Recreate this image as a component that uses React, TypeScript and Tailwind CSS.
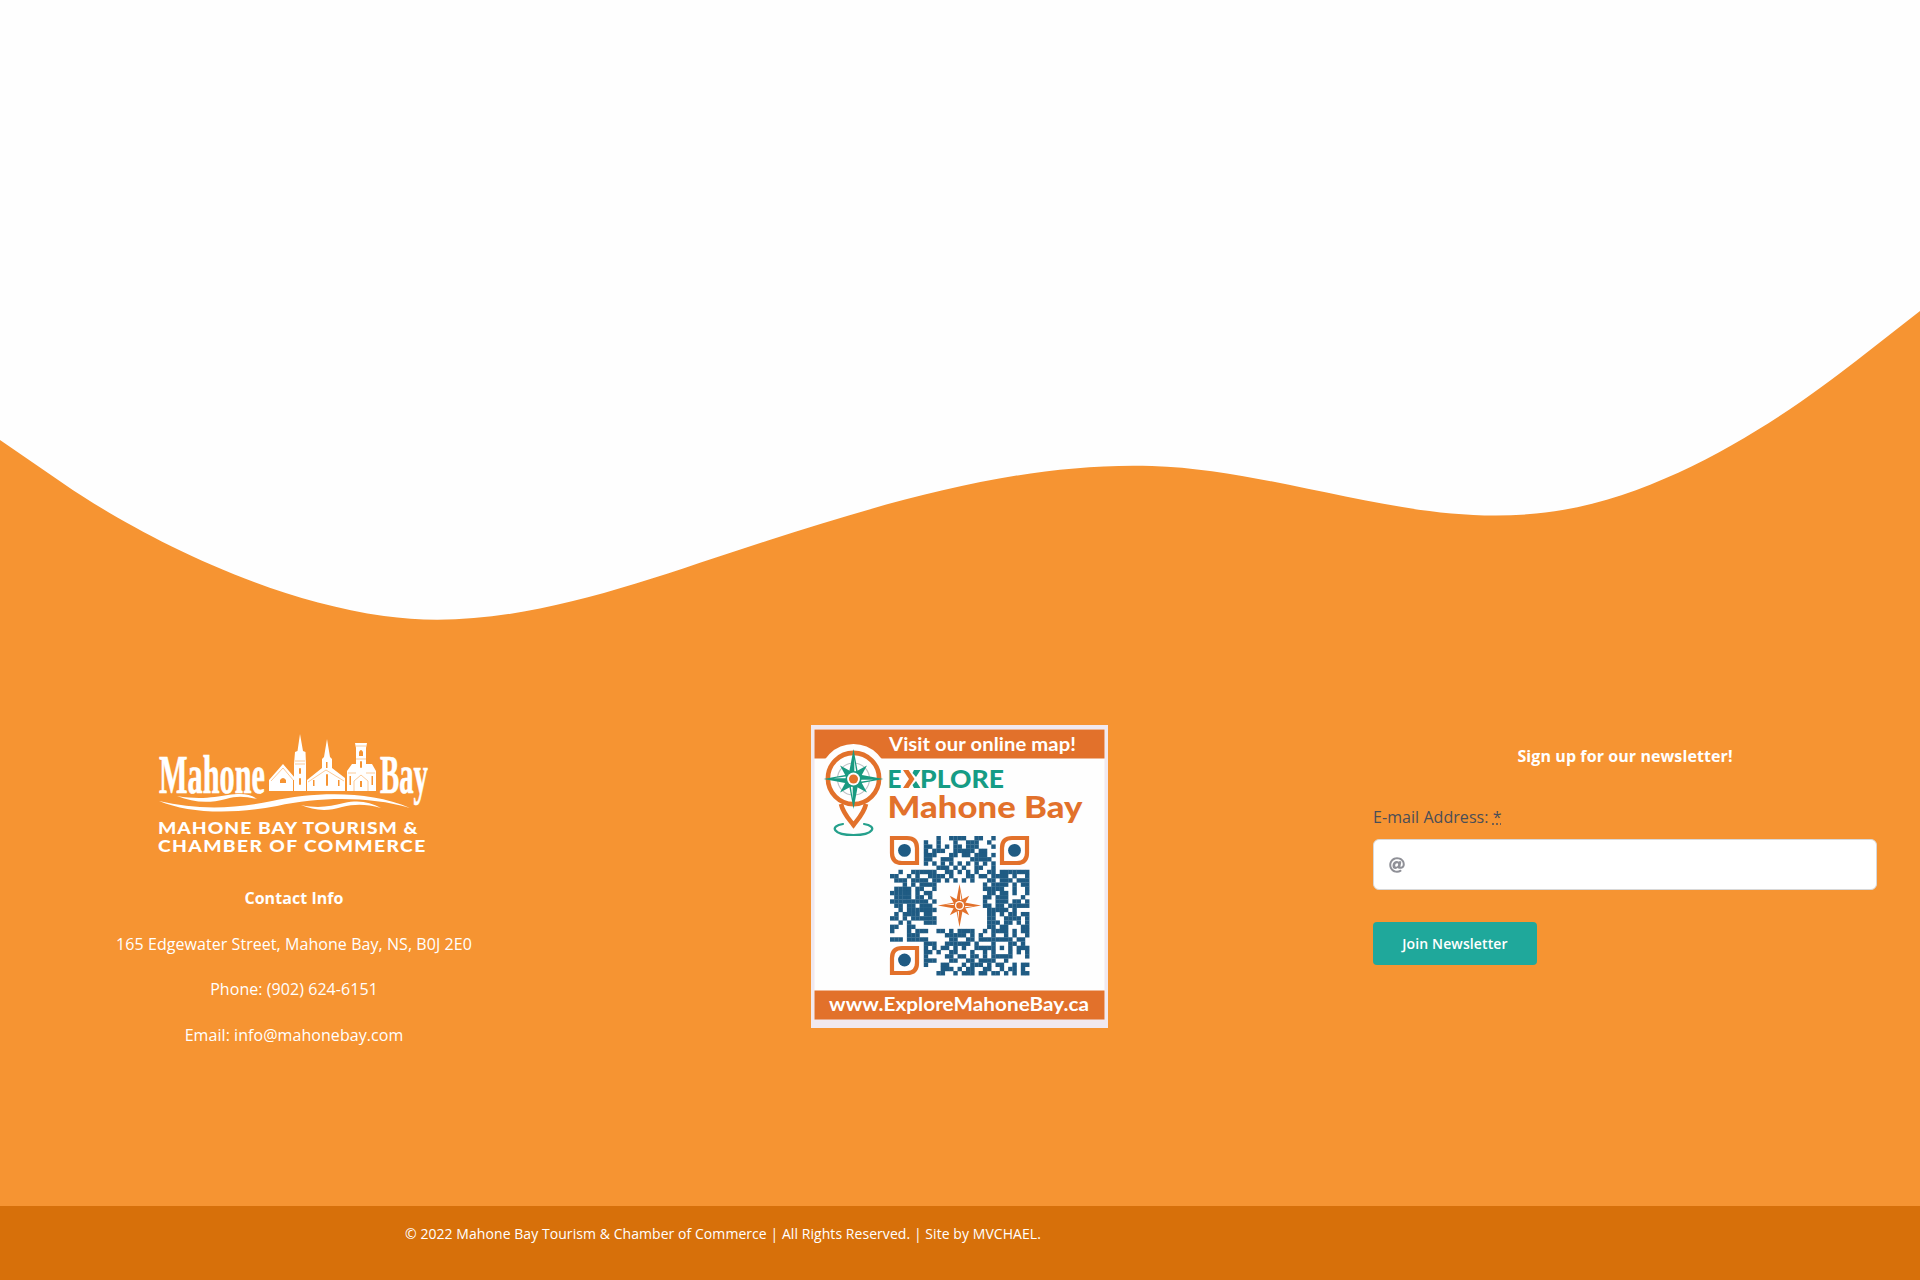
import { FaAt } from "react-icons/fa";

const QR_ROWS = [
  "...........#..####..##..#........",
  "........#..#...#..###..#.........",
  "........##.#.#.##.###...#........",
  "........#.###..#####.##..........",
  "........###...##.##.###.#........",
  "........##..###....#####.........",
  "........#.#.#.#.#.#.#.#.#........",
  "...........###.#.#..##..#........",
  "..#..######..##.#.#.#..##.#######",
  "##..#.#..####.#...##.##.####.#..#",
  ".###.####.##.#.#.#.#...##.###.###",
  "...#.#.####...........#.####.#.##",
  ".####.##..#...........#####..#..#",
  "#####.#.##.............##.##.#..#",
  ".####.##.#............##.###...#.",
  "#########.#...........#..###.##.#",
  ".##.##.###............##.##.#####",
  "..#.#######............#####.#...",
  ".#.####.##.............##.#.##.##",
  "##.#.######............##..####.#",
  "..#.#...###............###.##.#.#",
  "##..##.................##.##...##",
  "#...#.###..##.#.####..#.####.#.##",
  "....###......#####.#.#..#..#.#..#",
  "###.#####.....##..##.########.##.",
  "........###..######.#...#...##.#.",
  "........#.#.##.#.#..#####.#.#.###",
  "........##.#..##...#..#.#...#.#.#",
  "........#....##.##.##.#.#####...#",
  "........###...##..##.####..#.....",
  "........#...##...#.###.#.##..#.##",
  "............###.#.##..##..#.##.#.",
  "...........##..#.###.##.##.#.#.##",
];

function QrCode() {
  const m = 4.22;
  return (
    <g fill="#1f5b83">
      {QR_ROWS.map((row, y) =>
        [...row].map((cell, x) =>
          cell === "#" ? (
            <rect key={`${x}-${y}`} x={79 + x * m} y={111 + y * m} width={m + 0.2} height={m + 0.2} />
          ) : null
        )
      )}
      <g stroke="#e2712b" strokeWidth="4.2" fill="#fff">
        <path d="M81 113H96Q106 113 106 123V138H91Q81 138 81 128Z" />
        <path d="M216 113H201Q191 113 191 123V138H206Q216 138 216 128Z" />
        <path d="M81 248H96Q106 248 106 238V223H91Q81 223 81 233Z" />
      </g>
      <circle cx="93.5" cy="125.4" r="6.4" />
      <circle cx="203.5" cy="125.4" r="6.4" />
      <circle cx="93.5" cy="235" r="6.4" />
    </g>
  );
}

function Compass({ color, dot }: { color: string; dot: string }) {
  return (
    <g>
      <g fill={color}>
        {[45, 135, 225, 315].map((a) => (
          <path key={a} d="M0 -19L3.600 -7L0 0L-3.600 -7Z" transform={`rotate(${a})`} />
        ))}
      </g>
      {[0, 90, 180, 270].map((a) => (
        <g key={a} transform={`rotate(${a})`}>
          <path d="M0 -30L4.300 -7L0 0L-4.300 -7Z" fill={color} />
          <path d="M.8 -20L2.600 -8L.8 -6Z" fill="#fff" />
        </g>
      ))}
      <circle r="8" fill={color} />
      <circle r="6.400" fill="#fff" />
      <circle r="4.500" fill={dot} />
    </g>
  );
}

function MapPoster() {
  return (
    <svg width="297" height="303" viewBox="0 0 297 303" fontFamily="Lato, sans-serif" className="block">
      <rect width="297" height="303" fill="#f1e9ef" />
      <rect x="3.5" y="4" width="290" height="290" fill="#fefefe" />
      <rect x="3.5" y="4.5" width="290" height="29" fill="#e2712b" />
      <rect x="3.5" y="265.5" width="290" height="29" fill="#e2712b" />
      <circle cx="42.5" cy="53" r="34" fill="#fefefe" />
      <text x="78" y="26" fontSize="18" fontWeight="700" fill="#fff" textLength="187" lengthAdjust="spacingAndGlyphs">
        Visit our online map!
      </text>
      <path d="M30 79C32 88 37 93 42.5 100C48 93 53 88 55 79" fill="none" stroke="#e2712b" strokeWidth="4.6" />
      <circle cx="42.5" cy="53.5" r="25.6" fill="#fff" stroke="#e2712b" strokeWidth="4.6" />
      <circle cx="42.5" cy="54" r="16" fill="none" stroke="#bfc3c7" strokeWidth="1.2" />
      <g transform="translate(42.5 54)">
        <Compass color="#199a80" dot="#e2712b" />
      </g>
      <path
        d="M32 99C18 101 22 110 42.5 110S67 101 53 99"
        fill="none"
        stroke="#25a08c"
        strokeWidth="2.2"
        strokeLinecap="round"
      />
      <g fontWeight="900" fontSize="25.5" fill="#169c85">
        <text x="76.5" y="63" textLength="14" lengthAdjust="spacingAndGlyphs">E</text>
        <text x="109" y="63" textLength="84" lengthAdjust="spacingAndGlyphs">PLORE</text>
      </g>
      <path d="M92 45H97.500L103.500 54L97.500 63H92L98 54Z" fill="#e2712b" />
      <path d="M103 45H109.500L105 52L101.500 48ZM105 56L109.500 63H103L101.500 60Z" fill="#169c85" />
      <text
        x="76.500"
        y="92.500"
        fontSize="30"
        fontWeight="900"
        fill="#e2712b"
        textLength="195"
        lengthAdjust="spacingAndGlyphs"
      >
        Mahone Bay
      </text>
      <QrCode />
      <g transform="translate(148.500 180.500) scale(.72)">
        <Compass color="#e2712b" dot="#e2712b" />
      </g>
      <text
        x="18"
        y="286"
        fontSize="19"
        fontWeight="700"
        fill="#fff"
        textLength="260"
        lengthAdjust="spacingAndGlyphs"
      >
        www.ExploreMahoneBay.ca
      </text>
    </svg>
  );
}

function ChamberLogo() {
  return (
    <svg width="280" height="124" viewBox="0 0 280 124" fill="#fff" className="block overflow-visible">
      <g fontFamily="Liberation Serif, serif" fontWeight="700" fontSize="54" stroke="#fff" strokeWidth="0.7">
        <text x="5" y="58.500" textLength="106" lengthAdjust="spacingAndGlyphs">Mahone</text>
        <text x="226" y="58.500" textLength="48" lengthAdjust="spacingAndGlyphs">Bay</text>
      </g>
      {/* Church with side gable */}
      <path d="M115 46L129 30L141 44V46H139V57H115Z" />
      <path d="M140 57V30L141 18L143.500 17L146 0L149 17L151.500 18L152 30V57Z" />
      {/* Centre church */}
      <path d="M153 57V46L168 34V25L170 23L173 5L176 23L178 25V34L191 44V57Z" />
      {/* Tower church */}
      <path d="M193 57V37L198 30H202V14L201 9H213L212 14V30H218L222 37V57Z" />
      <g fill="#f69432">
        <path d="M126 49V46Q129 42 132 46V49Z" />
        <rect x="145" y="34" width="2" height="6" rx="1" />
        <rect x="145" y="44" width="2" height="7" rx="1" />
        <rect x="172" y="28" width="1.500" height="6" />
        <rect x="172" y="40" width="2" height="12" rx="1" />
        <rect x="159" y="46" width="1.500" height="6" />
        <rect x="184" y="46" width="1.500" height="6" />
        <path d="M205 22V18Q207 14 209 18V22Z" />
        <rect x="206" y="27" width="2" height="7" rx="1" />
        <rect x="195.500" y="42" width="1.500" height="9" />
        <rect x="217.500" y="42" width="1.500" height="9" />
        <rect x="206" y="47" width="2" height="6" />
      </g>
      <g fill="none" stroke="#f69432" strokeWidth="0.500">
        <path d="M117 47L129 34L140 47M141 27H151M141 30H151M154 48L172 36L190 47M194 39H202M212 39H221M200 57V47L207 41L214 47V57M202 25H212M202 12H212" />
      </g>
      {/* Waves */}
      <path d="M5 67C40 75 75 76 118 67C160 58 215 56 256 74C214 62 166 63 123 72C76 81 34 79 5 67Z" />
      <path d="M23 62C46 66 61 63 74 61C88 59 96 60 103 65C90 62 82 62 72 65C53 70 39 68 23 62Z" />
      <path d="M147 71C166 75 176 72 190 69C205 66 216 68 227 74C212 70 201 70 188 73C172 78 159 76 147 71Z" />
      <g fontFamily="Lato, sans-serif" fontWeight="900" fontSize="17.500">
        <text transform="translate(4 99.500) scale(1.1 1)" textLength="236" lengthAdjust="spacing">
          MAHONE BAY TOURISM &amp;
        </text>
        <text transform="translate(4 118) scale(1.1 1)" textLength="243" lengthAdjust="spacing">
          CHAMBER OF COMMERCE
        </text>
      </g>
    </svg>
  );
}

export default function App() {
  return (
    <div className="flex h-[1280px] w-full flex-col overflow-hidden bg-[#f69432] font-['Open_Sans',sans-serif] text-base tracking-[0.06px] text-white">
      <svg viewBox="0 0 1920 725" className="block h-[725px] w-full shrink-0" preserveAspectRatio="none">
        <path
          fill="#fefefe"
          d="M0 0V440L64 484C128 528 256 598 384 616C512 634 640 581.500 768 540.500C896 499.500 1024 462 1152 466C1280 470 1408 527 1536 513.500C1664 502 1792 411 1856 361L1920 311V0Z"
        />
      </svg>

      <footer className="flex grow flex-col">
        <div className="flex h-[481px] items-start justify-between pr-[43px] pl-[42px]">
          <section className="flex w-[504px] flex-col items-center pt-[9px] text-center leading-[25.500px]">
            <ChamberLogo />
            <p className="mt-[28px] font-bold">Contact Info</p>
            <p className="mt-5">165 Edgewater Street, Mahone Bay, NS, B0J 2E0</p>
            <p className="mt-5">Phone: (902) 624-6151</p>
            <p className="mt-5">Email: info@mahonebay.com</p>
          </section>

          <section className="flex w-[504px] justify-center">
            <MapPoster />
          </section>

          <section className="w-[504px] pt-[18px]">
            <h2 className="text-center leading-[26px] font-bold tracking-[0.09px]">Sign up for our newsletter!</h2>
            <form className="mt-[35px] flex flex-col items-start">
              <label htmlFor="email" className="leading-[26px] text-[#4a4e57]">
                E-mail Address: <abbr title="required" className="underline decoration-dotted">*</abbr>
              </label>
              <div className="mt-[9px] flex h-[51px] w-full items-center rounded-md border border-[#d8d8d8] bg-white px-[15px]">
                <FaAt className="size-4 text-[#8f9097]" />
                <input id="email" type="email" className="ml-3 grow outline-none" />
              </div>
              <button
                type="button"
                className="mt-8 h-[43px] w-[164px] rounded bg-[#1fa89b] text-sm font-semibold tracking-[0.12px]"
              >
                Join Newsletter
              </button>
            </form>
          </section>
        </div>

        <div className="grow bg-[#d7700a] pt-[17px] pl-[405px] text-sm leading-[21px] tracking-[0.06px]">
          © 2022 Mahone Bay Tourism &amp; Chamber of Commerce | All Rights Reserved. | Site by MVCHAEL.
        </div>
      </footer>
    </div>
  );
}
